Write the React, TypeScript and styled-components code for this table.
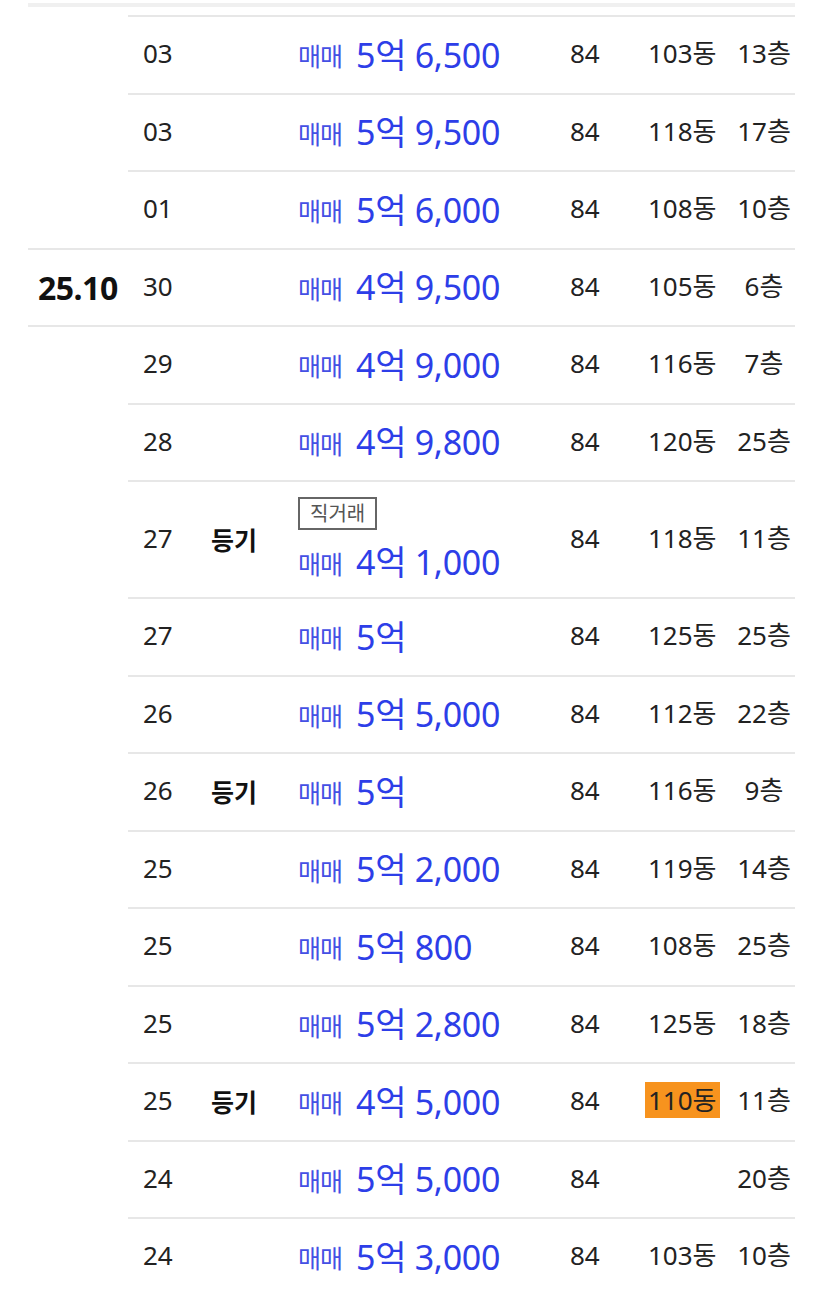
import React from "react";
import styled, { createGlobalStyle } from "styled-components";

type Deal = {
  day: string;
  reg?: boolean;
  direct?: boolean;
  price: string;
  area: string;
  dong: string;
  hot?: boolean;
  floor: string;
};

type Group = { month: string; deals: Deal[] };

const groups: Group[] = [
  {
    month: "",
    deals: [
      { day: "03", price: "5억 6,500", area: "84", dong: "103동", floor: "13층" },
      { day: "03", price: "5억 9,500", area: "84", dong: "118동", floor: "17층" },
      { day: "01", price: "5억 6,000", area: "84", dong: "108동", floor: "10층" },
    ],
  },
  {
    month: "25.10",
    deals: [
      { day: "30", price: "4억 9,500", area: "84", dong: "105동", floor: "6층" },
      { day: "29", price: "4억 9,000", area: "84", dong: "116동", floor: "7층" },
      { day: "28", price: "4억 9,800", area: "84", dong: "120동", floor: "25층" },
      { day: "27", reg: true, direct: true, price: "4억 1,000", area: "84", dong: "118동", floor: "11층" },
      { day: "27", price: "5억", area: "84", dong: "125동", floor: "25층" },
      { day: "26", price: "5억 5,000", area: "84", dong: "112동", floor: "22층" },
      { day: "26", reg: true, price: "5억", area: "84", dong: "116동", floor: "9층" },
      { day: "25", price: "5억 2,000", area: "84", dong: "119동", floor: "14층" },
      { day: "25", price: "5억 800", area: "84", dong: "108동", floor: "25층" },
      { day: "25", price: "5억 2,800", area: "84", dong: "125동", floor: "18층" },
      { day: "25", reg: true, price: "4억 5,000", area: "84", dong: "110동", hot: true, floor: "11층" },
      { day: "24", price: "5억 5,000", area: "84", dong: "", floor: "20층" },
      { day: "24", price: "5억 3,000", area: "84", dong: "103동", floor: "10층" },
    ],
  },
];

function App() {
  return (
    <>
      <GlobalStyle />
      <Page>
        <TopEdge />
        {groups.map((g, gi) =>
          g.deals.map((d, i) => (
            <Row key={`${gi}-${i}`}>
              <Lead $ruled={!!g.month && i <= 1}>{i === 0 ? g.month : ""}</Lead>
              <Body>
                <Day>{d.day}</Day>
                <Reg>{d.reg ? "등기" : ""}</Reg>
                <PriceCell>
                  {d.direct && <Badge>직거래</Badge>}
                  <PriceLine>
                    <Kind>매매</Kind>
                    <Amount>{d.price}</Amount>
                  </PriceLine>
                </PriceCell>
                <Area>{d.area}</Area>
                <Dong>{d.dong && <DongText $hot={!!d.hot}>{d.dong}</DongText>}</Dong>
                <Floor>{d.floor}</Floor>
              </Body>
            </Row>
          ))
        )}
      </Page>
    </>
  );
}

const GlobalStyle = createGlobalStyle`
  body {
    margin: 0;
    background: #ffffff;
    font-family: "Noto Sans", "Noto Sans CJK KR", sans-serif;
    color: #222222;
    overflow: hidden;
  }
`;

const Page = styled.div`
  width: 795px;
  padding-top: 3px;
`;

const TopEdge = styled.div`
  margin-left: 28px;
  height: 4px;
  background: #f0f0f0;
  margin-bottom: 8px;
`;

const Row = styled.div`
  display: grid;
  grid-template-columns: 100px 1fr;
  margin-left: 28px;
`;

const Lead = styled.div<{ $ruled: boolean }>`
  border-top: 2px solid ${(p) => (p.$ruled ? "#e7e7e7" : "transparent")};
  display: flex;
  align-items: center;
  padding-left: 10px;
  font-size: 32px;
  font-weight: 700;
  color: #111111;
  letter-spacing: -0.5px;
`;

const Body = styled.div`
  border-top: 2px solid #e7e7e7;
  min-height: 75.5px;
  display: grid;
  grid-template-columns: 68px 87px 272px 75px 88px 62px;
  padding-left: 15px;
  align-items: center;
  font-size: 26px;
  line-height: 34px;
`;

const Day = styled.div`
  color: #222222;
  margin-top: -3px;
`;

const Reg = styled.div`
  font-weight: 700;
  color: #111111;
  font-size: 25px;
`;

const PriceCell = styled.div`
  display: flex;
  flex-direction: column;
  align-items: flex-start;
  gap: 12px;
  padding: 15px 0;
`;

const Badge = styled.span`
  border: 2px solid #666666;
  color: #555555;
  font-size: 20px;
  line-height: 29px;
  padding: 0 10px;
`;

const PriceLine = styled.div`
  display: flex;
  align-items: center;
  gap: 14px;
  height: 40px;
  line-height: 40px;
`;

const Kind = styled.span`
  font-size: 25px;
  color: #4450e4;
  letter-spacing: -1px;
  padding-top: 3px;
`;

const Amount = styled.span`
  font-size: 34px;
  color: #2d3ee8;
  letter-spacing: -0.3px;
`;

const Area = styled.div`
  color: #222222;
  margin-top: -3px;
`;

const Dong = styled.div`
  margin-top: -3px;
`;

const DongText = styled.span<{ $hot: boolean }>`
  padding: 0 3px;
  background: ${(p) => (p.$hot ? "#f7931e" : "transparent")};
  color: #222222;
`;

const Floor = styled.div`
  text-align: center;
  margin-top: -3px;
`;

export default App;
